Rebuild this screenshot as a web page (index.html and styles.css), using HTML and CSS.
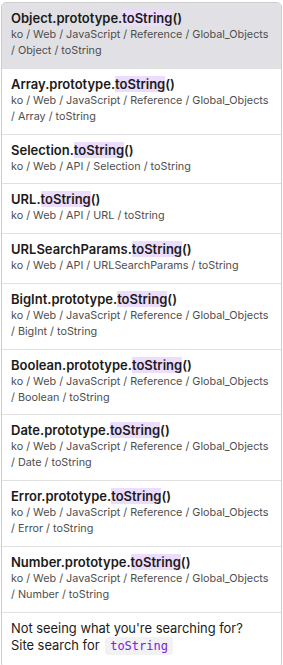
FILE: index.html
```html
<!DOCTYPE html>
<html lang="en">
<head>
  <meta charset="UTF-8" />
  <meta name="viewport" content="width=device-width, initial-scale=1.0"/>
  <title>Search results</title>
  <link rel="stylesheet" href="styles.css">
</head>
<body>

  <div class="search-results">
    <a class="result active" href="#">
      <div class="result-title">Object.prototype.<mark>toString</mark>()</div>
      <div class="result-path">ko /&nbsp;Web /&nbsp;JavaScript /&nbsp;Reference /&nbsp;Global_Objects /&nbsp;Object /&nbsp;toString</div>
    </a>
    <a class="result" href="#">
      <div class="result-title">Array.prototype.<mark>toString</mark>()</div>
      <div class="result-path">ko /&nbsp;Web /&nbsp;JavaScript /&nbsp;Reference /&nbsp;Global_Objects /&nbsp;Array /&nbsp;toString</div>
    </a>
    <a class="result" href="#">
      <div class="result-title">Selection.<mark>toString</mark>()</div>
      <div class="result-path">ko /&nbsp;Web /&nbsp;API /&nbsp;Selection /&nbsp;toString</div>
    </a>
    <a class="result" href="#">
      <div class="result-title">URL.<mark>toString</mark>()</div>
      <div class="result-path">ko /&nbsp;Web /&nbsp;API /&nbsp;URL /&nbsp;toString</div>
    </a>
    <a class="result" href="#">
      <div class="result-title">URLSearchParams.<mark>toString</mark>()</div>
      <div class="result-path">ko /&nbsp;Web /&nbsp;API /&nbsp;URLSearchParams /&nbsp;toString</div>
    </a>
    <a class="result" href="#">
      <div class="result-title">BigInt.prototype.<mark>toString</mark>()</div>
      <div class="result-path">ko /&nbsp;Web /&nbsp;JavaScript /&nbsp;Reference /&nbsp;Global_Objects /&nbsp;BigInt /&nbsp;toString</div>
    </a>
    <a class="result" href="#">
      <div class="result-title">Boolean.prototype.<mark>toString</mark>()</div>
      <div class="result-path">ko /&nbsp;Web /&nbsp;JavaScript /&nbsp;Reference /&nbsp;Global_Objects /&nbsp;Boolean /&nbsp;toString</div>
    </a>
    <a class="result" href="#">
      <div class="result-title">Date.prototype.<mark>toString</mark>()</div>
      <div class="result-path">ko /&nbsp;Web /&nbsp;JavaScript /&nbsp;Reference /&nbsp;Global_Objects /&nbsp;Date /&nbsp;toString</div>
    </a>
    <a class="result" href="#">
      <div class="result-title">Error.prototype.<mark>toString</mark>()</div>
      <div class="result-path">ko /&nbsp;Web /&nbsp;JavaScript /&nbsp;Reference /&nbsp;Global_Objects /&nbsp;Error /&nbsp;toString</div>
    </a>
    <a class="result" href="#">
      <div class="result-title">Number.prototype.<mark>toString</mark>()</div>
      <div class="result-path">ko /&nbsp;Web /&nbsp;JavaScript /&nbsp;Reference /&nbsp;Global_Objects /&nbsp;Number /&nbsp;toString</div>
    </a>
    <div class="result nothing-found">
      Not seeing what you're searching for?<br>
      Site search for <code>toString</code>
    </div>
  </div>

</body>
</html>
```

FILE: styles.css
```css
body {
  margin: 0;
  font-family: Inter, 'Noto Sans', sans-serif;
  background-color: #fff;
  color: #1b1b1b;
}
.search-results {
  margin: 2px 1px 3px 1px;
  background-color: #fff;
  border: 1px solid #cdcdcd;
  border-radius: 5px;
  overflow: hidden;
}
.result {
  display: block;
  padding: 6px 9px 8.75px 9px;
  border-bottom: 1px solid #e0e0e0;
  color: inherit;
  text-decoration: none;
}
.result.active {
  background-color: #e1e1e5;
}
.result-title {
  font-size: 13px;
  font-weight: 600;
  line-height: 18px;
}
.result-title mark {
  background-color: #ecdcfd;
  color: inherit;
}
.result-path {
  font-size: 10.8px;
  line-height: 16px;
  color: #4e4e4e;
}
.nothing-found {
  border-bottom: none;
  font-size: 12.9px;
  line-height: 17px;
  padding: 7px 9px 12px 9px;
}
.nothing-found code {
  font-family: 'DejaVu Sans Mono', monospace;
  font-size: 12px;
  color: #7524d7;
  background-color: #f2f1f4;
  border-radius: 4px;
  padding: 2px 5px;
  margin-left: 2px;
}
```
